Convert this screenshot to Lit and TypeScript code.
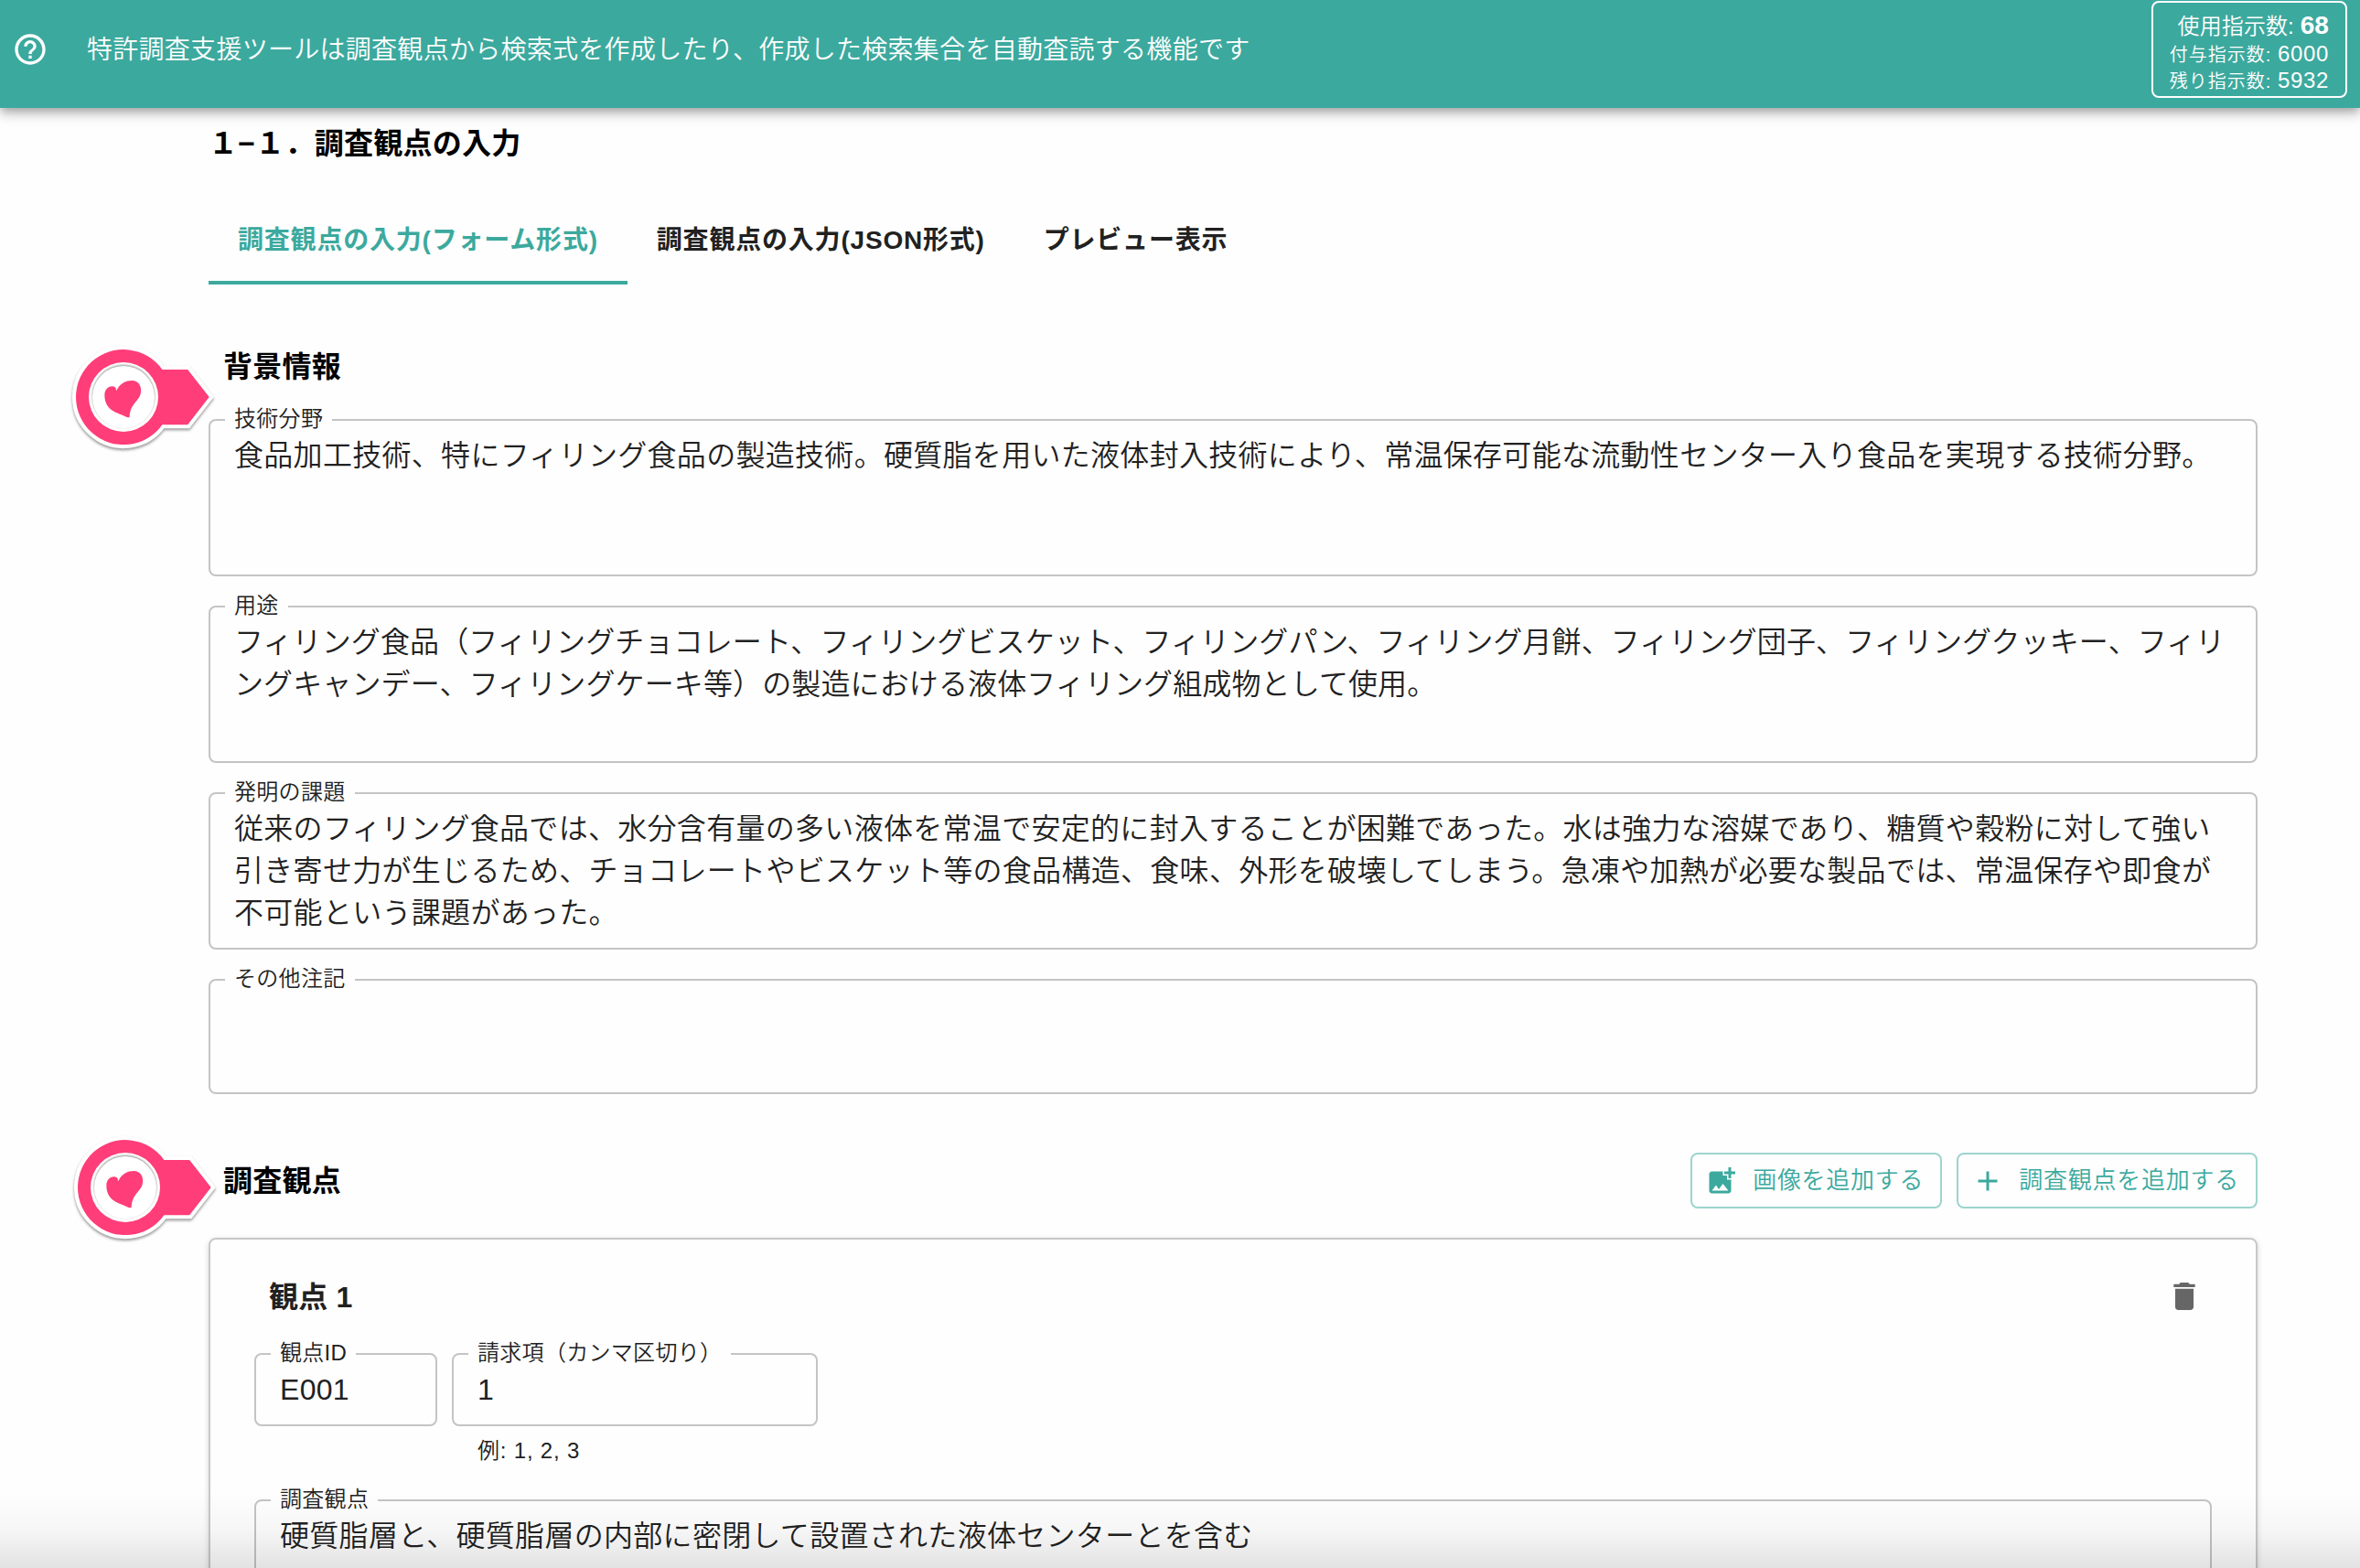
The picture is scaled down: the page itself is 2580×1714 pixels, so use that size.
import { LitElement, html, svg, css } from "lit";
import { customElement, property } from "lit/decorators.js";

const icons = {
  help: svg`<path d="M11 18h2v-2h-2v2zm1-16C6.48 2 2 6.48 2 12s4.48 10 10 10 10-4.48 10-10S17.52 2 12 2zm0 18c-4.41 0-8-3.59-8-8s3.59-8 8-8 8 3.59 8 8-3.59 8-8 8zm0-14c-2.21 0-4 1.79-4 4h2c0-1.1.9-2 2-2s2 .9 2 2c0 2-3 1.75-3 5h2c0-2.25 3-2.5 3-5 0-2.21-1.79-4-4-4z"/>`,
  addPhoto: svg`<path d="M19 7v2.99s-1.99.01-2 0V7h-3s.01-1.99 0-2h3V2h2v3h3v2h-3zm-3 4V8h-3V5H5c-1.1 0-2 .9-2 2v12c0 1.1.9 2 2 2h12c1.1 0 2-.9 2-2v-8h-3zM5 19l3-4 2 3 3-4 4 5H5z"/>`,
  add: svg`<path d="M19 13h-6v6h-2v-6H5v-2h6V5h2v6h6v2z"/>`,
  trash: svg`<path d="M6 19c0 1.1.9 2 2 2h8c1.1 0 2-.9 2-2V7H6v12zM19 4h-3.5l-1-1h-5l-1 1H5v2h14V4z"/>`,
};

@customElement("mui-icon")
class MuiIcon extends LitElement {
  @property() name: keyof typeof icons = "help";
  static styles = css`
    :host { display: block; flex: none; width: 40px; height: 40px; }
    svg { display: block; width: 100%; height: 100%; fill: currentColor; }
  `;
  render() {
    return html`<svg viewBox="0 0 24 24">${icons[this.name]}</svg>`;
  }
}

@customElement("outlined-field")
class OutlinedField extends LitElement {
  @property() label = "";
  @property() value = "";
  static styles = css`
    :host { display: flow-root; }
    .field {
      box-sizing: border-box;
      height: calc(100% + 14px);
      min-width: 0;
      margin: -14px 0 0;
      padding: 1px 26px 0 16px;
      border: 2px solid #c4c4c4;
      border-radius: 8px;
    }
    .label {
      height: 30px;
      padding: 0 10px;
      font-size: 24px;
      line-height: 28px;
      letter-spacing: 0.3px;
      white-space: nowrap;
    }
    .value {
      padding-left: 10px;
      font-size: 32px;
      line-height: 46px;
      letter-spacing: var(--value-tracking, 0.3px);
    }
  `;
  render() {
    return html`<fieldset class="field">
      <legend class="label">${this.label}</legend>
      <div class="value">${this.value}</div>
    </fieldset>`;
  }
}

@customElement("heart-pointer")
class HeartPointer extends LitElement {
  static styles = css`
    :host { display: block; width: 180px; height: 130px; }
    svg { display: block; overflow: visible; }
    .body { filter: drop-shadow(0 2px 1.5px rgba(0, 0, 0, 0.4)); }
    .disc { filter: drop-shadow(0 -1px 1px rgba(0, 0, 0, 0.45)); }
  `;
  render() {
    const outline = "M42.4 -30H70.2L93.7 0L70.2 30.2H42.4A52 52 0 1 1 42.4 -30Z";
    return html`<svg width="180" height="130" viewBox="-65 -65 180 130">
      <path class="body" d=${outline} fill="#fff" stroke="#fff" stroke-width="8" stroke-linejoin="miter" />
      <path d=${outline} fill="#ff3d78" />
      <circle r="38" fill="#fff" />
      <circle class="disc" r="34" fill="#fff" />
      <path
        transform="scale(.3333)"
        fill="#ff3d78"
        d="M-26 -20C-22 -24 -24 -34 -36 -35C-50 -36 -62 -24 -62 -6C-62 20 -50 38 -30 48C-18 54 -4 58 6 64C12 67 18 68 20 65C20 50 24 38 32 26C42 12 52 4 56 -10C62 -34 50 -54 28 -54C6 -54 -8 -44 -18 -30C-20 -26 -22 -22 -26 -20Z"
      />
    </svg>`;
  }
}

const background = [
  { label: "技術分野", cls: "area", value: "食品加工技術、特にフィリング食品の製造技術。硬質脂を用いた液体封入技術により、常温保存可能な流動性センター入り食品を実現する技術分野。" },
  { label: "用途", cls: "area tight", value: "フィリング食品（フィリングチョコレート、フィリングビスケット、フィリングパン、フィリング月餅、フィリング団子、フィリングクッキー、フィリングキャンデー、フィリングケーキ等）の製造における液体フィリング組成物として使用。" },
  { label: "発明の課題", cls: "area", value: "従来のフィリング食品では、水分含有量の多い液体を常温で安定的に封入することが困難であった。水は強力な溶媒であり、糖質や穀粉に対して強い引き寄せ力が生じるため、チョコレートやビスケット等の食品構造、食味、外形を破壊してしまう。急凍や加熱が必要な製品では、常温保存や即食が不可能という課題があった。" },
  { label: "その他注記", cls: "area short", value: "" },
];

@customElement("app-root")
class AppRoot extends LitElement {
  static styles = css`
    :host {
      display: block;
      position: relative;
      height: 1714px;
      overflow: hidden;
      background: #fefefe;
      color: #212121;
      font-family: "Liberation Sans", "Noto Sans CJK JP", sans-serif;
      font-weight: 350;
    }
    .bar {
      position: relative;
      display: flex;
      box-sizing: border-box;
      height: 118px;
      padding: 1px 14px 0 13px;
      background: #3ca99e;
      color: #fff;
      box-shadow: 0 4px 8px -2px rgba(0, 0, 0, 0.2), 0 8px 10px rgba(0, 0, 0, 0.14), 0 2px 20px rgba(0, 0, 0, 0.12);
    }
    .help { margin-top: 33px; }
    .lead {
      margin: 34px auto 0 42px;
      font-size: 28px;
      line-height: 40px;
      letter-spacing: 0.28px;
    }
    .quota {
      display: flex;
      flex-direction: column;
      box-sizing: border-box;
      width: 214px;
      height: 106px;
      padding: 9px 18px 0 0;
      border: 2px solid #fff;
      border-radius: 8px;
      font-size: 24px;
      letter-spacing: 0.67px;
      line-height: 27px;
      text-align: right;
      white-space: nowrap;
    }
    .used { line-height: 32px; letter-spacing: 0.1px; }
    .used-count { font-size: 28px; font-weight: 700; }
    .small { font-size: 20px; letter-spacing: 1px; }
    .main { padding: 19px 112px 0 228px; }
    .title, .heading {
      margin: 0;
      color: #000;
      font-size: 32px;
      font-weight: 700;
      line-height: 40px;
      letter-spacing: 0.25px;
    }
    .tabs { display: flex; margin-top: 36px; }
    .tab {
      box-sizing: border-box;
      height: 98px;
      padding: 30px 32px 0;
      border-bottom: 4px solid transparent;
      font-size: 28px;
      font-weight: 700;
      line-height: 40px;
      letter-spacing: 0.8px;
    }
    .tab.active { color: #3ca99e; border-color: #3ca99e; }
    .heading { padding-left: 16px; }
    .first { margin-top: 70px; }
    .areas { display: grid; gap: 32px; margin-top: 37px; }
    .area { height: 172px; }
    .short { height: 126px; }
    .tight { --value-tracking: 0.12px; }
    .section { display: flex; align-items: center; gap: 16px; height: 61px; margin-top: 64px; }
    .grow { flex: 1; }
    .button {
      display: flex;
      align-items: center;
      box-sizing: border-box;
      height: 61px;
      padding: 0 18px 0 14px;
      border: 2px solid #9dd4ce;
      border-radius: 8px;
      color: #3ca99e;
      font-size: 26px;
      letter-spacing: 0.74px;
      white-space: nowrap;
    }
    .button-icon { width: 36px; height: 36px; margin-right: 16px; }
    .button-text { line-height: 36px; padding-bottom: 2px; }
    .card {
      box-sizing: border-box;
      height: 500px;
      margin-top: 32px;
      padding: 42px 48px 0;
      border: 2px solid #c8c8c8;
      border-radius: 8px;
      box-shadow: 0 2px 6px rgba(0, 0, 0, 0.16);
    }
    .card-head { display: flex; align-items: flex-start; justify-content: space-between; height: 41px; padding: 0 10px 0 16px; }
    .card-title { padding-top: 1px; font-size: 32px; font-weight: 700; line-height: 40px; letter-spacing: 0.2px; }
    .trash { color: #666; }
    .ids { display: flex; gap: 16px; margin-top: 41px; }
    .id { width: 200px; height: 80px; }
    .claims { width: 400px; height: 80px; }
    .hint {
      padding: 11px 0 0 28px;
      font-size: 24px;
      line-height: 32px;
      letter-spacing: 0.8px;
    }
    .viewpoint { height: 172px; margin-top: 37px; }
    .pin { position: absolute; }
    .pin-a { left: 69.5px; top: 368.5px; }
    .pin-b { left: 72px; top: 1233px; }
    .fade {
      position: absolute;
      inset: auto 0 0 0;
      height: 84px;
      background: linear-gradient(rgba(0, 0, 0, 0), rgba(0, 0, 0, 0.03) 50%, rgba(0, 0, 0, 0.11));
    }
  `;
  render() {
    return html`
      <header class="bar">
        <mui-icon class="help" name="help"></mui-icon>
        <div class="lead">特許調査支援ツールは調査観点から検索式を作成したり、作成した検索集合を自動査読する機能です</div>
        <div class="quota">
          <div class="used">使用指示数: <span class="used-count">68</span></div>
          <div><span class="small">付与指示数: </span>6000</div>
          <div><span class="small">残り指示数: </span>5932</div>
        </div>
      </header>
      <main class="main">
        <h1 class="title">１−１．調査観点の入力</h1>
        <nav class="tabs">
          <div class="tab active">調査観点の入力(フォーム形式)</div>
          <div class="tab">調査観点の入力(JSON形式)</div>
          <div class="tab">プレビュー表示</div>
        </nav>
        <h2 class="heading first">背景情報</h2>
        <div class="areas">
          ${background.map((f) => html`<outlined-field class=${f.cls} .label=${f.label} .value=${f.value}></outlined-field>`)}
        </div>
        <div class="section">
          <h2 class="heading grow">調査観点</h2>
          <div class="button"><mui-icon class="button-icon" name="addPhoto"></mui-icon><span class="button-text">画像を追加する</span></div>
          <div class="button"><mui-icon class="button-icon" name="add"></mui-icon><span class="button-text">調査観点を追加する</span></div>
        </div>
        <section class="card">
          <div class="card-head">
            <div class="card-title">観点 1</div>
            <mui-icon class="trash" name="trash"></mui-icon>
          </div>
          <div class="ids">
            <outlined-field class="id" label="観点ID" value="E001"></outlined-field>
            <div>
              <outlined-field class="claims" label="請求項（カンマ区切り）" value="1"></outlined-field>
              <div class="hint">例: 1, 2, 3</div>
            </div>
          </div>
          <outlined-field class="viewpoint" label="調査観点" value="硬質脂層と、硬質脂層の内部に密閉して設置された液体センターとを含む"></outlined-field>
        </section>
      </main>
      <heart-pointer class="pin pin-a"></heart-pointer>
      <heart-pointer class="pin pin-b"></heart-pointer>
      <div class="fade"></div>
    `;
  }
}
